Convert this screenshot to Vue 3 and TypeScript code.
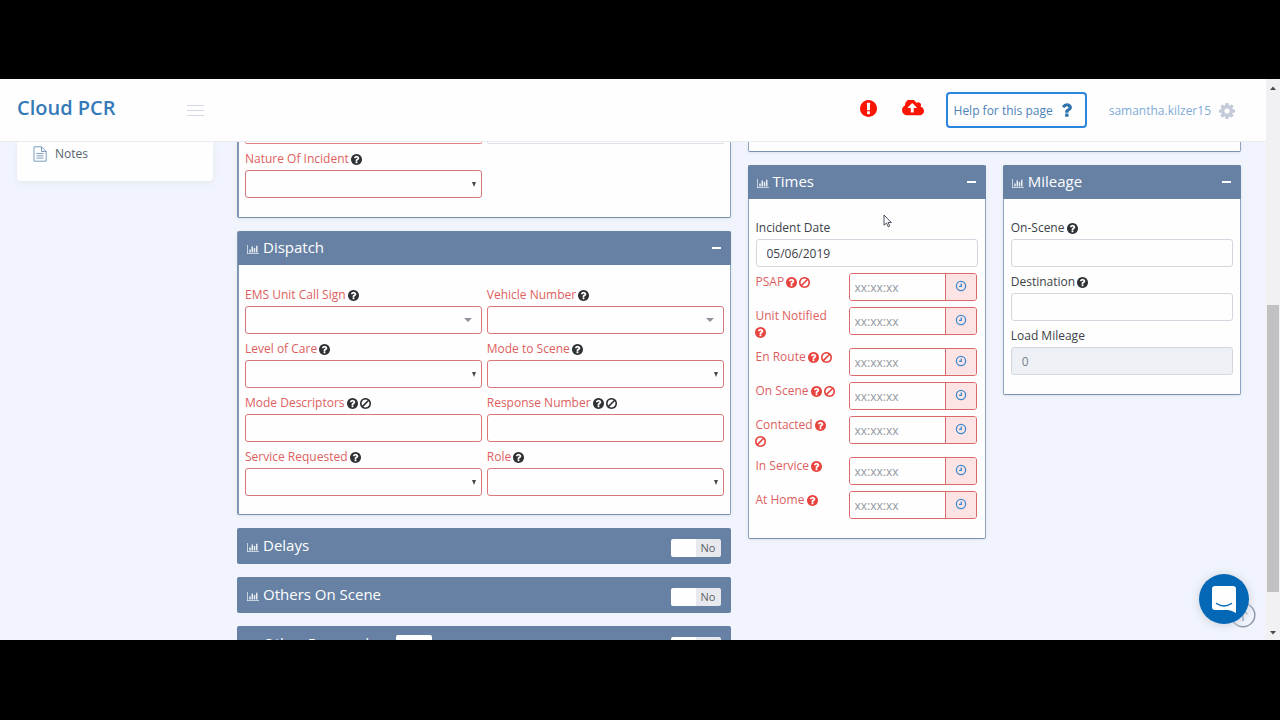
<script setup lang="ts">
import { ref, reactive } from 'vue'

interface Field {
  id: string
  label: string
  kind: 'combo' | 'select' | 'text'
  ban?: boolean
}

interface TimeField {
  id: string
  label: string
  ban: boolean
}

const icons = {
  question:
    'M1024 1376v-192q0-14-9-23t-23-9h-192q-14 0-23 9t-9 23v192q0 14 9 23t23 9h192q14 0 23-9t9-23zM1280 704q0-88-55.5-163t-138.500-116-170-41q-243 0-371 213-15 24 8 42l132 100q7 6 19 6 16 0 25-12 53-68 86-92 34-24 86-24 48 0 85.500 26t37.500 59q0 38-20 61t-68 45q-63 28-115.500 86.500t-52.500 125.500v36q0 14 9 23t23 9h192q14 0 23-9t9-23q0-19 21.500-49.500t54.500-49.500q32-18 49-28.500t46-35 44.500-48 28-60.500 12.500-81zM1664 896q0 209-103 385.500t-279.500 279.500-385.500 103-385.500-103-279.500-279.500-103-385.500 103-385.500 279.500-279.500 385.500-103 385.500 103 279.500 279.500 103 385.500z',
  ban: 'M1440 893q0-161-87-295l-754 753q137 89 297 89 111 0 211.500-43.500t173.500-116.500 116-174.500 43-212.500zm-999 299l755-754q-135-91-300-91-148 0-273 73t-198 199-73 274q0 162 89 299zm1223-299q0 157-61 300t-163.500 246-245 164-298.500 61-298.500-61-245-164-163.500-246-61-300 61-299.500 163.500-245.500 245-164 298.500-61 298.500 61 245 164 163.500 245.500 61 299.500z',
  chart:
    'M640 896v512h-256v-512h256zm384-512v1024h-256v-1024h256zm1024 1152v128h-2048v-1536h128v1408h1920zm-640-896v768h-256v-768h256zm384-384v1152h-256v-1152h256z',
}

const dispatchFields: Field[] = [
  { id: 'unit', label: 'EMS Unit Call Sign', kind: 'combo' },
  { id: 'vehicle', label: 'Vehicle Number', kind: 'combo' },
  { id: 'care', label: 'Level of Care', kind: 'select' },
  { id: 'mode', label: 'Mode to Scene', kind: 'select' },
  { id: 'descriptors', label: 'Mode Descriptors', kind: 'text', ban: true },
  { id: 'response', label: 'Response Number', kind: 'text', ban: true },
  { id: 'service', label: 'Service Requested', kind: 'select' },
  { id: 'role', label: 'Role', kind: 'select' },
]

const timeFields: TimeField[] = [
  { id: 'psap', label: 'PSAP', ban: true },
  { id: 'notified', label: 'Unit Notified', ban: false },
  { id: 'enroute', label: 'En Route', ban: true },
  { id: 'onscene', label: 'On Scene', ban: true },
  { id: 'contacted', label: 'Contacted', ban: true },
  { id: 'inservice', label: 'In Service', ban: false },
  { id: 'athome', label: 'At Home', ban: false },
]

const sections = reactive([
  { id: 'delays', title: 'Delays', on: false, badge: false },
  { id: 'others', title: 'Others On Scene', on: false, badge: false },
  { id: 'responders', title: 'Other Responders', on: false, badge: true },
])

const incidentDate = ref('05/06/2019')
const loadMileage = ref('0')
</script>

<template>
  <div class="stage">
    <div class="window">
      <div class="page">
        <header class="topbar">
          <h1 class="brand">Cloud PCR</h1>
          <button class="burger" type="button"><span></span><span></span><span></span></button>
          <div class="tools">
            <svg class="alert" viewBox="128 128 1536 1536"><path d="M896 128q209 0 385.500 103t279.500 279.500 103 385.500-103 385.500-279.500 279.500-385.500 103-385.500-103-279.500-279.500-103-385.500 103-385.500 279.500-279.500 385.500-103zm128 1247v-190q0-14-9-23.500t-22-9.500h-192q-13 0-23 10t-10 23v190q0 13 10 23t23 10h192q13 0 22-9.500t9-23.500zm-2-344l18-621q0-12-10-18-10-8-24-8h-220q-14 0-24 8-10 6-10 18l17 621q0 10 10 17.500t24 7.500h185q14 0 23.500-7.500t10.500-17.500z" /></svg>
            <svg class="cloud" viewBox="-64 256 1920 1280"><path d="M1216 864q0-14-9-23l-352-352q-9-9-23-9t-23 9l-351 351q-10 12-10 24 0 14 9 23t23 9h224v352q0 13 9.500 22.500t22.500 9.500h192q13 0 22.500-9.500t9.500-22.500v-352h224q13 0 22.500-9.500t9.500-22.500zm640 288q0 159-112.500 271.500t-271.500 112.500h-1088q-185 0-316.500-131.500t-131.500-316.500q0-130 70-240t188-165q-2-30-2-43 0-212 150-362t362-150q156 0 285.500 87t188.500 231q71-62 166-62 106 0 181 75t75 181q0 76-41 138 130 31 213.500 135.500t83.500 238.500z" /></svg>
            <button class="help" type="button">
              Help for this page
              <svg viewBox="376 256 1040 1280"><path d="M1088 1256v240q0 16-12 28t-28 12h-240q-16 0-28-12t-12-28v-240q0-16 12-28t28-12h240q16 0 28 12t12 28zm316-600q0 54-15.500 101t-35 76.500-55 59.500-57.500 43.500-61 35.500q-41 23-68.500 65t-27.500 67q0 17-12 32.500t-28 15.500h-240q-15 0-25.500-18.500t-10.500-37.500v-45q0-83 65-156.500t143-108.500q59-27 84-56t25-76q0-42-46.500-74t-107.500-32q-65 0-108 29-35 25-107 115-13 16-31 16-12 0-25-8l-164-125q-13-10-15.500-25t5.500-28q160-266 464-266 80 0 161 31t146 83 106 127.500 41 158.500z" /></svg>
            </button>
            <a class="user" href="#">
              samantha.kilzer15
              <svg viewBox="128 128 1536 1536"><path d="M1152 896q0-106-75-181t-181-75-181 75-75 181 75 181 181 75 181-75 75-181zm512-109v222q0 12-8 23t-20 13l-185 28q-19 54-39 91 35 50 107 138 10 12 10 25t-9 23q-27 37-99 108t-94 71q-12 0-26-9l-138-108q-44 23-91 38-16 136-29 186-7 28-36 28h-222q-14 0-24.500-8.500t-11.500-21.500l-28-184q-49-16-90-37l-141 107q-10 9-25 9-14 0-25-11-126-114-165-168-7-10-7-23 0-12 8-23 15-21 51-66.500t54-70.500q-27-50-41-99l-183-27q-13-2-21-12.500t-8-23.500v-222q0-12 8-23t19-13l186-28q14-46 39-92-40-57-107-138-10-12-10-24 0-10 9-23 26-36 98.500-107.500t94.500-71.500q13 0 26 10l138 107q44-23 91-38 16-136 29-186 7-28 36-28h222q14 0 24.500 8.500t11.500 21.500l28 184q49 16 90 37l142-107q9-9 24-9 13 0 25 10 129 119 165 170 7 8 7 22 0 12-8 23-15 21-51 66.500t-54 70.500q26 50 41 98l183 28q13 2 21 12.500t8 23.500z" /></svg>
            </a>
          </div>
        </header>

        <main class="content">
          <nav class="sidebar">
            <a class="nav-item" href="#">
              <svg viewBox="0 0 14 16"><path d="M1 .8h7.500l4.700 4.700v9.700H1zM8.500.8v4.700h4.700M3.500 7.500h7M3.500 9.800h7M3.500 12.100h7" /></svg>
              Notes
            </a>
          </nav>

          <div class="column">
            <section class="panel wide-edge clipped">
              <div class="fields body">
                <div class="cut required"></div>
                <div class="cut"></div>
                <div class="field required">
                  <label for="nature">Nature Of Incident <svg class="mark" viewBox="128 128 1536 1536"><path :d="icons.question" /></svg></label>
                  <div class="control select"><select id="nature"></select></div>
                </div>
              </div>
            </section>

            <section class="panel wide-edge">
              <header class="panel-head">
                <svg class="chart" viewBox="0 0 2048 1792"><path :d="icons.chart" /></svg>
                <h2>Dispatch</h2>
                <button class="fold" type="button"><span></span></button>
              </header>
              <div class="fields body tall">
                <div v-for="f in dispatchFields" :key="f.id" class="field required">
                  <label :for="f.id">{{ f.label }} <svg class="mark" viewBox="128 128 1536 1536"><path :d="icons.question" /></svg>
                    {{ ' ' }}<svg v-if="f.ban" class="mark" viewBox="128 128 1536 1536"><path :d="icons.ban" /></svg></label>
                  <div class="control" :class="f.kind">
                    <input v-if="f.kind === 'text'" :id="f.id" type="text" />
                    <select v-else :id="f.id"></select>
                  </div>
                </div>
              </div>
            </section>

            <section v-for="s in sections" :key="s.id" class="bar">
              <svg class="chart" viewBox="0 0 2048 1792"><path :d="icons.chart" /></svg>
              <h2 :id="s.id">{{ s.title }}</h2>
              <span v-if="s.badge" class="badge"></span>
              <label class="toggle">
                <input v-model="s.on" type="checkbox" :aria-labelledby="s.id" />
                <span class="knob"></span>
                <span class="state">No</span>
              </label>
            </section>
          </div>

          <div class="column">
            <section class="panel clipped stub"></section>
            <div class="pair">
              <section class="panel">
                <header class="panel-head">
                  <svg class="chart" viewBox="0 0 2048 1792"><path :d="icons.chart" /></svg>
                  <h2>Times</h2>
                  <button class="fold" type="button"><span></span></button>
                </header>
                <div class="body padded">
                  <div class="field">
                    <label for="date">Incident Date</label>
                    <div class="control"><input id="date" v-model="incidentDate" type="text" /></div>
                  </div>
                  <div class="times">
                    <div v-for="t in timeFields" :key="t.id" class="time required">
                      <label :for="t.id">{{ t.label }} <svg class="mark" viewBox="128 128 1536 1536"><path :d="icons.question" /></svg>
                        {{ ' ' }}<svg v-if="t.ban" class="mark" viewBox="128 128 1536 1536"><path :d="icons.ban" /></svg></label>
                      <div class="group">
                        <input :id="t.id" type="text" placeholder="xx:xx:xx" />
                        <button type="button">
                          <svg viewBox="0 0 12 12"><circle cx="6" cy="6" r="4.600" /><path d="M6.300 3.400v2.900H4" /></svg>
                        </button>
                      </div>
                    </div>
                  </div>
                </div>
              </section>

              <section class="panel">
                <header class="panel-head">
                  <svg class="chart" viewBox="0 0 2048 1792"><path :d="icons.chart" /></svg>
                  <h2>Mileage</h2>
                  <button class="fold" type="button"><span></span></button>
                </header>
                <div class="body padded">
                  <div class="field">
                    <label for="mscene">On-Scene <svg class="mark" viewBox="128 128 1536 1536"><path :d="icons.question" /></svg></label>
                    <div class="control"><input id="mscene" type="text" /></div>
                  </div>
                  <div class="field">
                    <label for="mdest">Destination <svg class="mark" viewBox="128 128 1536 1536"><path :d="icons.question" /></svg></label>
                    <div class="control"><input id="mdest" type="text" /></div>
                  </div>
                  <div class="field">
                    <label for="mload">Load Mileage</label>
                    <div class="control"><input id="mload" v-model="loadMileage" type="text" disabled /></div>
                  </div>
                </div>
              </section>
            </div>
          </div>
        </main>
      </div>

      <div class="scrollbar">
        <svg viewBox="0 0 6 4"><path d="M0 4L3 0.500L6 4z" /></svg>
        <div class="track"><span class="before"></span><span class="thumb"></span><span class="after"></span></div>
        <svg viewBox="0 0 6 4"><path d="M0 0L3 3.500L6 0z" /></svg>
      </div>

      <button class="to-top" type="button">
        <svg viewBox="0 0 26 26"><circle cx="13" cy="13" r="11.800" /><path d="M13 19V8M9 12l4-4.500 4 4.500" /></svg>
      </button>
      <button class="chat" type="button">
        <svg viewBox="0 0 26 28"><path class="paper" d="M4 1h18a3 3 0 0 1 3 3v24q-4-2.500-8-3H4a3 3 0 0 1-3-3V4a3 3 0 0 1 3-3z" /><path class="smile" d="M5.500 18.500q7.500 5 15 0" /></svg>
      </button>
      <svg class="cursor" viewBox="0 0 9 14"><path d="M1 1v10.200l2.500-2.200 1.700 3.800 1.500-.7-1.600-3.600h3.200z" /></svg>
    </div>
  </div>
</template>

<style>
body {
  margin: 0;
  background: #000;
}
</style>

<style scoped>
* {
  box-sizing: border-box;
}

.stage {
  height: 100vh;
  padding: 79px 0 80px;
  background: #000;
  font-family: "Open Sans", "Noto Sans", sans-serif;
  font-size: 12px;
  color: #3c4248;
}

button,
input,
select {
  margin: 0;
  font: inherit;
  color: inherit;
}

svg {
  flex: none;
  fill: currentColor;
}

h1,
h2 {
  margin: 0;
}

.window {
  position: relative;
  display: flex;
  height: 100%;
  overflow: hidden;
  background: #f1f4fc;
}

.page {
  flex: 1;
  min-width: 0;
  display: flex;
  flex-direction: column;
}

.topbar {
  flex: none;
  display: flex;
  align-items: center;
  height: 63px;
  padding: 0 31px 0 17px;
  background: #fefefe;
  border-bottom: 1px solid #e9ebf1;
}

.brand {
  width: 170px;
  padding-bottom: 5px;
  font-size: 20px;
  line-height: 26px;
  font-weight: 600;
  color: #357ab8;
}

.burger {
  display: flex;
  flex-direction: column;
  gap: 4px;
  width: 17px;
  padding: 0;
  border: 0;
  background: none;
}

.burger span {
  height: 1px;
  background: #d3d9e4;
}

.tools {
  flex: 1;
  display: flex;
  align-items: center;
  justify-content: flex-end;
}

.alert {
  width: 17px;
  height: 17px;
  margin: 0 25px 4px 0;
  color: #fb1505;
}

.cloud {
  width: 22px;
  height: 16px;
  margin: 0 22px 4px 0;
  color: #fb1505;
}

.help {
  display: flex;
  align-items: center;
  gap: 8px;
  height: 36px;
  padding: 0 13px 0 6px;
  border: 2px solid #2b86e0;
  border-radius: 4px;
  background: #fefefe;
  font-size: 12px;
  color: #4c83b8;
}

.help svg {
  width: 11px;
  height: 14px;
  color: #2e72ae;
}

.user {
  display: flex;
  align-items: center;
  gap: 8px;
  margin-left: 22px;
  padding-top: 1px;
  font-size: 12px;
  color: #7fabd6;
  text-decoration: none;
}

.user svg {
  width: 16px;
  height: 16px;
  color: #c3cbd9;
}

.content {
  flex: 1;
  min-height: 0;
  overflow: hidden;
  display: flex;
  align-items: flex-start;
  padding: 0 25px 0 17px;
}

.sidebar {
  flex: none;
  width: 196px;
  height: 39px;
  margin-right: 24px;
  padding: 2px 16px;
  background: #fefefe;
  border-radius: 0 0 4px 4px;
  box-shadow: 0 2px 6px #e4e8ef;
}

.nav-item {
  display: flex;
  align-items: center;
  gap: 8px;
  line-height: 20px;
  color: #56616d;
  text-decoration: none;
}

.nav-item svg {
  width: 14px;
  height: 16px;
  fill: none;
  stroke: #7c9fc0;
}

.column {
  flex: 1;
  min-width: 0;
  display: flex;
  flex-direction: column;
  gap: 13px;
}

.column + .column {
  margin-left: 17px;
}

.pair {
  display: grid;
  grid-template-columns: repeat(2, minmax(0, 1fr));
  align-items: start;
  gap: 17px;
}

.panel {
  background: #fefefe;
  border: 1px solid #8ea3bf;
  border-top: 0;
  border-bottom-color: #7b91b0;
  border-radius: 2px;
  box-shadow: 0 1px 3px #dde2ea;
}

.wide-edge {
  border-left: 2px solid #8096b2;
}

.clipped {
  border-radius: 0 0 2px 2px;
}

.stub {
  height: 10px;
}

.panel-head,
.bar {
  display: flex;
  align-items: center;
  background: #6681a4;
  color: #fff;
}

.panel-head {
  height: 34px;
  margin: 0 -1px;
  padding: 0 10px 0 9px;
  border-radius: 2px 2px 0 0;
}

.bar {
  flex: none;
  height: 36px;
  padding: 0 10px;
  border-radius: 2px;
}

.panel-head h2,
.bar h2 {
  font-size: 15px;
  line-height: 22px;
  font-weight: 400;
  padding-bottom: 2px;
}

.chart {
  width: 12px;
  height: 11px;
  margin: 3px 4px 0 0;
  opacity: 0.85;
}

.fold {
  margin-left: auto;
  padding: 8px 0;
  border: 0;
  background: none;
}

.fold span {
  display: block;
  width: 9px;
  height: 2px;
  background: #fff;
}

.badge {
  align-self: flex-start;
  width: 36px;
  height: 18px;
  margin: 9px 0 0 5px;
  border-radius: 2px;
  background: #fefefe;
}

.toggle {
  position: relative;
  display: flex;
  width: 50px;
  height: 18px;
  margin: 4px 0 0 auto;
  border-radius: 2px;
  overflow: hidden;
  font-size: 11px;
  line-height: 18px;
  color: #5c6168;
}

.toggle input {
  position: absolute;
  inset: 0;
  opacity: 0;
}

.knob {
  flex: 1;
  background: #fefefe;
}

.state {
  flex: 1;
  background: #e8e9ee;
  text-align: center;
}

.body {
  padding: 0 7px 15px;
}

.wide-edge .body {
  padding-left: 6px;
  padding-right: 6px;
}

.padded {
  padding-top: 18px;
}

.tall {
  padding-top: 19px;
  padding-bottom: 14px;
}

.fields {
  display: grid;
  grid-template-columns: 1fr 1fr;
  column-gap: 5px;
}

.cut {
  height: 2px;
  margin-bottom: 4px;
  border: solid #dcdfe5;
  border-width: 0 1px 1px;
  border-radius: 0 0 3px 3px;
}

.cut.required {
  border-color: #df8083;
}

.field {
  margin-bottom: 4px;
}

.field label {
  display: block;
  line-height: 22px;
}

.required label {
  color: #dd5f5f;
}

.mark {
  width: 11px;
  height: 11px;
  margin-left: -1px;
  vertical-align: -2px;
  color: #2f3235;
}

.times .mark {
  color: #e8443f;
}

.control {
  position: relative;
}

.control input,
.control select {
  display: block;
  width: 100%;
  height: 28px;
  padding: 0 10px;
  border: 1px solid #d2d7e0;
  border-radius: 3px;
  background: #fefefe;
  appearance: none;
  outline: none;
}

.control input:disabled {
  background: #edf0f4;
  color: #7a828a;
  opacity: 1;
}

.required .control input,
.required .control select {
  border-color: #d9777a;
}

.select::after,
.combo::after {
  content: "";
  position: absolute;
  top: 12px;
  right: 6px;
  border: solid transparent;
  border-width: 5px 2px 0;
  border-top-color: #45494e;
  pointer-events: none;
}

.combo::after {
  right: 10px;
  border-width: 4px 4px 0;
  border-top-color: #8d929b;
}

.times {
  padding-top: 2px;
}

.time {
  display: flex;
  align-items: flex-start;
}

.time label {
  width: 80px;
  margin-right: 13px;
  padding: 1px 0 8px;
  line-height: 16px;
}

.group {
  flex: 1;
  min-width: 0;
  display: flex;
  height: 28px;
  margin: 0 1px 6px 0;
  border: 1px solid #d9696b;
  border-radius: 3px;
  overflow: hidden;
}

.time:last-child .group {
  margin-bottom: 4px;
}

.group input {
  flex: 1;
  min-width: 0;
  padding: 0 5px;
  border: 0;
  background: #fefefe;
  outline: none;
}

.group input::placeholder {
  color: #93989e;
  opacity: 1;
}

.group button {
  display: flex;
  align-items: center;
  justify-content: center;
  width: 31px;
  padding: 0 0 2px;
  border: 0;
  border-left: 1px solid #d9696b;
  background: #fde3e3;
}

.group button svg {
  width: 12px;
  height: 12px;
  fill: none;
  stroke: #3c8ad0;
  stroke-width: 1.300;
}

.scrollbar {
  flex: none;
  display: flex;
  flex-direction: column;
  align-items: center;
  width: 14px;
  padding: 7px 0 5px;
  background: #f1f1f3;
}

.scrollbar svg {
  width: 6px;
  height: 4px;
  color: #4a4a4a;
}

.track {
  flex: 1;
  display: flex;
  flex-direction: column;
  width: 12px;
}

.before {
  flex: 215;
}

.thumb {
  flex: 287;
  background: #c1c1c3;
}

.after {
  flex: 39;
}

.to-top,
.chat {
  position: absolute;
  padding: 0;
  border: 0;
  border-radius: 50%;
}

.to-top {
  right: 24px;
  bottom: 12px;
  width: 26px;
  height: 26px;
  background: none;
}

.to-top svg {
  display: block;
  fill: none;
  stroke: #8d98ab;
  stroke-width: 1.500;
}

.chat {
  right: 31px;
  bottom: 16px;
  display: grid;
  place-items: center;
  width: 50px;
  height: 50px;
  background: #0468b6;
  box-shadow: 0 1px 10px #c9cfda;
}

.chat svg {
  width: 26px;
  height: 28px;
}

.paper {
  fill: #fefefe;
}

.smile {
  fill: none;
  stroke: #0468b6;
  stroke-width: 1.500;
  stroke-linecap: round;
}

.cursor {
  position: absolute;
  left: 883px;
  top: 135px;
  width: 9px;
  height: 14px;
  fill: #fff;
  stroke: #3d4250;
  stroke-width: 0.900;
}
</style>
